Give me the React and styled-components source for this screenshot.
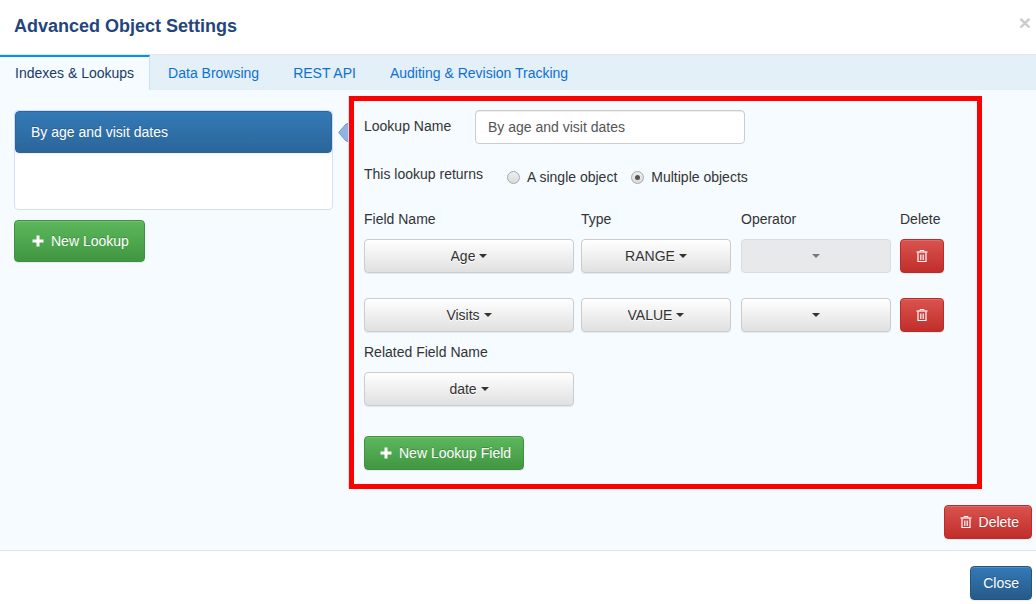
import React, { useState } from "react";
import styled, { createGlobalStyle, css } from "styled-components";

const GlobalStyle = createGlobalStyle`
  *, *::before, *::after { box-sizing: border-box; }
  body {
    margin: 0;
    background: #fff;
    color: #333;
    font-family: "Liberation Sans", Arial, Helvetica, sans-serif;
    font-size: 14px;
    line-height: 20px;
  }
  button, input, select { font: inherit; color: inherit; margin: 0; }
`;

const Header = styled.header`
  display: flex;
  justify-content: space-between;
  align-items: flex-start;
  padding: 13px 5px 15px 14px;
  border-bottom: 1px solid #e5e5e5;
`;

const Title = styled.h1`
  margin: 0;
  color: #24457c;
  font-size: 18px;
  line-height: 26px;
  font-weight: bold;
`;

const Dismiss = styled.button`
  padding: 0;
  border: 0;
  background: none;
  color: #ccc;
  font-size: 21px;
  line-height: 20px;
  font-weight: bold;
  cursor: pointer;
`;

const Tabs = styled.nav`
  display: flex;
  background: #e3f0f8;
`;

const Tab = styled.a`
  padding: 8px 17px 7px;
  line-height: 20px;
  color: #0f6fd1;
  text-decoration: none;
  ${(p) =>
    p.$active &&
    css`
      margin-right: 1px;
      padding: 6px 15px 7px;
      border-top: 2px solid #0096e1;
      border-right: 1px solid #cfdff3;
      background: #f5fbff;
      color: #173a68;
    `}
`;

const Body = styled.main`
  padding: 6px 4px 11px 14px;
  background: #f5fbff;
`;

const Columns = styled.div`
  display: grid;
  grid-template-columns: 319fr 633fr;
  gap: 16px;
  margin-right: 50px;
`;

const Sidebar = styled.aside`
  padding-top: 14px;
`;

const LookupList = styled.ul`
  position: relative;
  min-height: 100px;
  margin: 0 0 10px;
  padding: 0;
  border: 1px solid #d5e0f6;
  border-radius: 4px;
  background: #fff;
  list-style: none;
`;

const LookupItem = styled.button`
  display: block;
  width: 100%;
  padding: 10px 15px;
  border: 1px solid #2b669a;
  border-radius: 4px;
  background: linear-gradient(#337ab7, #2b669a);
  box-shadow: 0 1px 2px rgba(0, 0, 0, 0.075);
  color: #fff;
  text-align: left;
  text-shadow: 0 -1px 0 #286090;
  cursor: pointer;
`;

const Pointer = styled.svg`
  position: absolute;
  top: 12px;
  right: -16px;
`;

const tones = {
  success: ["#5cb85c", "#419641", "#3e8f3e"],
  danger: ["#d9534f", "#c12e2a", "#b92c28"],
  primary: ["#337ab7", "#265a88", "#245580"],
};

const Button = styled.button`
  display: inline-flex;
  align-items: center;
  justify-content: center;
  gap: 7px;
  padding: ${(p) => (p.$large ? "10px 15px 10px 17px" : "6px 12px")};
  ${(p) => p.$lead && "padding-left: 15px;"}
  border: 1px solid ${(p) => tones[p.$tone][2]};
  border-radius: 4px;
  background: linear-gradient(${(p) => tones[p.$tone][0]}, ${(p) => tones[p.$tone][1]});
  box-shadow: inset 0 1px 0 rgba(255, 255, 255, 0.15), 0 1px 1px rgba(0, 0, 0, 0.075);
  color: #fff;
  text-shadow: 0 -1px 0 rgba(0, 0, 0, 0.2);
  cursor: pointer;
`;

const DeleteRowButton = styled(Button)`
  width: 44px;
  height: 34px;
  padding: 0;
`;

const Pane = styled.section`
  padding: 9px 10px 14px;
  border: 5px solid #f00;
  box-shadow: -1px 0 0 #d5e0f6;
`;

const FormRow = styled.div`
  display: grid;
  grid-template-columns: ${(p) => (p.$wideLabel ? "143px" : "111px")} 1fr;
  margin-bottom: 20px;
`;

const RowLabel = styled.label`
  padding-top: ${(p) => (p.$inset ? "6px" : "0")};
`;

const TextInput = styled.input`
  width: 100%;
  max-width: 270px;
  height: 34px;
  padding: 6px 12px;
  border: 1px solid #ccc;
  border-radius: 4px;
  background: #fff;
  box-shadow: inset 0 1px 1px rgba(0, 0, 0, 0.075);
  color: #555;
`;

const Choices = styled.div`
  display: flex;
  gap: 14px;
  padding-top: 3px;
`;

const Choice = styled.label`
  display: flex;
  align-items: center;
  gap: 7px;
`;

const Radio = styled.input`
  appearance: none;
  display: grid;
  place-items: center;
  width: 13px;
  height: 13px;
  border: 1px solid #a8a8a8;
  border-radius: 50%;
  background: linear-gradient(#eee, #dadada);
  &:checked::before {
    content: "";
    width: 5px;
    height: 5px;
    border-radius: 50%;
    background: #555;
  }
`;

const FieldTable = styled.table`
  width: 580px;
  max-width: 100%;
  margin-top: 22px;
  border-collapse: collapse;
  table-layout: fixed;
  th {
    padding: 0 0 10px;
    font-weight: normal;
    text-align: left;
  }
  td {
    padding: 0 0 25px;
    vertical-align: top;
  }
  td:last-child { line-height: 0; }
  tr:last-child td { padding-bottom: 10px; }
`;

const Col = styled.col`
  width: ${(p) => p.$width};
`;

const Picker = styled.label`
  display: flex;
  align-items: center;
  justify-content: center;
  width: ${(p) => (p.$wide ? "210px" : "150px")};
  height: 34px;
  border: 1px solid #ccc;
  border-radius: 4px;
  background: linear-gradient(#fff, #e0e0e0);
  box-shadow: inset 0 1px 0 rgba(255, 255, 255, 0.15), 0 1px 1px rgba(0, 0, 0, 0.075);
  text-shadow: 0 1px 0 #fff;
  ${(p) =>
    p.$disabled &&
    css`
      background: #e0e0e0;
      box-shadow: none;
      opacity: 0.65;
    `}
`;

const PickerSelect = styled.select`
  appearance: none;
  field-sizing: content;
  height: 20px;
  padding: 0 ${(p) => (p.value ? "4px" : "0")} 0 0;
  border: 0;
  background: none;
  line-height: 20px;
  text-shadow: inherit;
  opacity: 1;
`;

const Caret = styled.span`
  border-top: 4px solid #333;
  border-left: 4px solid transparent;
  border-right: 4px solid transparent;
`;

const Related = styled.div`
  margin-bottom: 30px;
`;

const RelatedLabel = styled.label`
  display: block;
  margin-bottom: 10px;
`;

const Actions = styled.div`
  display: flex;
  justify-content: flex-end;
  margin-top: 16px;
`;

const Footer = styled.footer`
  display: flex;
  justify-content: flex-end;
  padding: 15px 4px 4px;
  border-top: 1px solid #e5e5e5;
`;

const PlusIcon = () => (
  <svg width="12" height="12" viewBox="0 0 12 12" aria-hidden="true">
    <path d="M4.5 0.5h3v4h4v3h-4v4h-3v-4h-4v-3h4z" fill="#fff" />
  </svg>
);

const TrashIcon = () => (
  <svg width="12" height="12" viewBox="0 0 12 12" fill="none" stroke="#fff" aria-hidden="true">
    <path d="M4 1.5V0.5h4v1" />
    <path d="M0.5 2h11" strokeWidth="1.2" />
    <path d="M2 2.5v9h8v-9" strokeWidth="1.2" />
    <path d="M4.5 4.5v5.5M6 4.5v5.5M7.5 4.5v5.5" strokeWidth="0.8" />
  </svg>
);

function Dropdown({ id, label, value, options, wide, disabled, onChange }) {
  return (
    <Picker $wide={wide} $disabled={disabled}>
      <PickerSelect
        id={id}
        aria-label={label}
        value={value}
        disabled={disabled}
        onChange={(e) => onChange(e.target.value)}
      >
        {options.map((o) => (
          <option key={o} value={o}>{o}</option>
        ))}
      </PickerSelect>
      <Caret />
    </Picker>
  );
}

function ChoiceGroup({ value, onChange }) {
  return (
    <Choices>
      <Choice>
        <Radio type="radio" name="returns" checked={value === "single"} onChange={() => onChange("single")} />
        A single object
      </Choice>
      <Choice>
        <Radio type="radio" name="returns" checked={value === "multiple"} onChange={() => onChange("multiple")} />
        Multiple objects
      </Choice>
    </Choices>
  );
}

const tabNames = ["Indexes & Lookups", "Data Browsing", "REST API", "Auditing & Revision Tracking"];

export default function App() {
  const [name, setName] = useState("By age and visit dates");
  const [returns, setReturns] = useState("multiple");
  const [related, setRelated] = useState("date");
  const [fields, setFields] = useState([
    { field: "Age", type: "RANGE", operator: "" },
    { field: "Visits", type: "VALUE", operator: "" },
  ]);
  const update = (index, key) => (value) =>
    setFields(fields.map((f, i) => (i === index ? { ...f, [key]: value } : f)));

  return (
    <>
      <GlobalStyle />
      <Header>
        <Title>Advanced Object Settings</Title>
        <Dismiss type="button" aria-label="Dismiss">×</Dismiss>
      </Header>
      <Tabs>
        {tabNames.map((t, i) => (
          <Tab key={t} href="#" $active={i === 0}>{t}</Tab>
        ))}
      </Tabs>
      <Body>
        <Columns>
          <Sidebar>
            <LookupList>
              <li>
                <LookupItem type="button">{name}</LookupItem>
              </li>
              <Pointer width="10" height="19" viewBox="0 0 10 19" aria-hidden="true">
                <path d="M10 0.5L8 1L0.7 9.5L8 18L10 18.5z" fill="#8fb4e3" />
                <path d="M10 0.5L8 1L0.7 9.5L8 18L10 18.5" fill="none" stroke="#7597c8" />
              </Pointer>
            </LookupList>
            <Button type="button" $tone="success" $large>
              <PlusIcon />
              New Lookup
            </Button>
          </Sidebar>
          <Pane>
            <FormRow>
              <RowLabel htmlFor="lookup-name" $inset>Lookup Name</RowLabel>
              <TextInput
                id="lookup-name"
                type="text"
                value={name}
                onChange={(e) => setName(e.target.value)}
              />
            </FormRow>
            <FormRow $wideLabel role="radiogroup" aria-labelledby="returns-label">
              <RowLabel as="span" id="returns-label">This lookup returns</RowLabel>
              <ChoiceGroup value={returns} onChange={setReturns} />
            </FormRow>
            <FieldTable>
              <colgroup>
                <Col $width="217px" />
                <Col $width="160px" />
                <Col $width="159px" />
                <Col $width="44px" />
              </colgroup>
              <thead>
                <tr>
                  <th>Field Name</th>
                  <th>Type</th>
                  <th>Operator</th>
                  <th>Delete</th>
                </tr>
              </thead>
              <tbody>
                {fields.map((f, i) => (
                  <tr key={i}>
                    <td>
                      <Dropdown wide label="Field name" value={f.field} options={["Age", "Visits"]} onChange={update(i, "field")} />
                    </td>
                    <td>
                      <Dropdown label="Type" value={f.type} options={["RANGE", "VALUE"]} onChange={update(i, "type")} />
                    </td>
                    <td>
                      <Dropdown label="Operator" value={f.operator} options={[""]} disabled={f.type === "RANGE"} onChange={update(i, "operator")} />
                    </td>
                    <td>
                      <DeleteRowButton type="button" $tone="danger" aria-label={`Delete ${f.field}`}>
                        <TrashIcon />
                      </DeleteRowButton>
                    </td>
                  </tr>
                ))}
              </tbody>
            </FieldTable>
            <Related>
              <RelatedLabel htmlFor="related-field">Related Field Name</RelatedLabel>
              <Dropdown wide id="related-field" value={related} options={["date"]} onChange={setRelated} />
            </Related>
            <Button type="button" $tone="success" $lead>
              <PlusIcon />
              New Lookup Field
            </Button>
          </Pane>
        </Columns>
        <Actions>
          <Button type="button" $tone="danger" $lead>
            <TrashIcon />
            Delete
          </Button>
        </Actions>
      </Body>
      <Footer>
        <Button type="button" $tone="primary">Close</Button>
      </Footer>
    </>
  );
}
